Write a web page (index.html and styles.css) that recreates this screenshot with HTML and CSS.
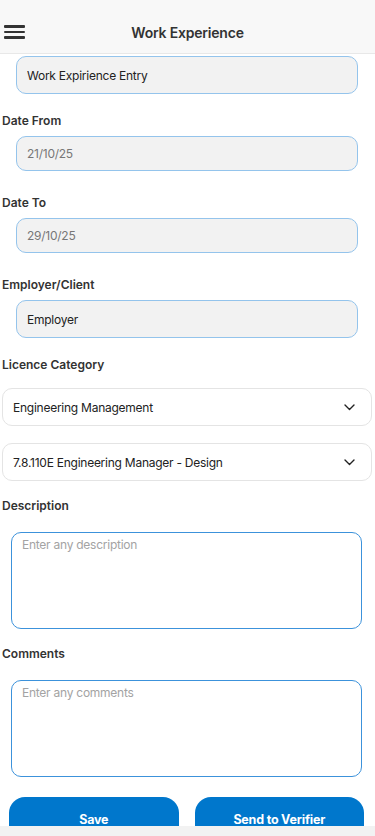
FILE: index.html
```html
<!DOCTYPE html>
<html lang="en">
<head>
    <meta charset="UTF-8">
    <meta name="viewport" content="width=device-width, initial-scale=1.0">
    <title>Work Experience</title>
    <link rel="stylesheet" href="styles.css">
</head>
<body>
    <header class="topbar">
        <button class="menu-btn" aria-label="Menu">
            <span></span><span></span><span></span>
        </button>
        <h1>Work Experience</h1>
    </header>

    <form class="form">
        <input class="field field-title" type="text" value="Work Expirience Entry">

        <label class="label label-first">Date From</label>
        <input class="field field-date" type="text" value="21/10/25" readonly>

        <label class="label">Date To</label>
        <input class="field field-date" type="text" value="29/10/25" readonly>

        <label class="label">Employer/Client</label>
        <input class="field" type="text" value="Employer">

        <label class="label label-select">Licence Category</label>
        <div class="select">
            <span>Engineering Management</span>
            <svg width="11" height="7" viewBox="0 0 11 7"><path d="M1 1l4.5 4.5L10 1" fill="none" stroke="#222" stroke-width="1.4" stroke-linecap="round" stroke-linejoin="round"/></svg>
        </div>
        <div class="select">
            <span>7.8.110E Engineering Manager - Design</span>
            <svg width="11" height="7" viewBox="0 0 11 7"><path d="M1 1l4.5 4.5L10 1" fill="none" stroke="#222" stroke-width="1.4" stroke-linecap="round" stroke-linejoin="round"/></svg>
        </div>

        <label class="label label-area">Description</label>
        <textarea class="area" placeholder="Enter any description"></textarea>

        <label class="label label-area">Comments</label>
        <textarea class="area" placeholder="Enter any comments"></textarea>

        <div class="actions">
            <button type="button" class="btn">Save</button>
            <button type="button" class="btn">Send to Verifier</button>
        </div>
    </form>

    <div class="bottom-bar"></div>
</body>
</html>
```

FILE: styles.css
```css
body {
    margin: 0;
    font-family: Inter, "Noto Sans", sans-serif;
    color: #222;
    background: #fff;
}

.topbar {
    height: 54px;
    background-color: #f8f8f8;
    border-bottom: 1px solid #e8e8e8;
    display: flex;
    align-items: center;
    justify-content: center;
    position: relative;
    padding-top: 11px;
    box-sizing: border-box;
}

.topbar h1 {
    margin: 0;
    font-size: 14px;
    font-weight: 600;
    letter-spacing: -0.2px;
    color: #333;
}

.menu-btn {
    position: absolute;
    left: 4px;
    top: 25px;
    width: 21px;
    padding: 0;
    border: none;
    background: none;
    display: flex;
    flex-direction: column;
    gap: 3px;
}

.menu-btn span {
    display: block;
    height: 2.5px;
    background-color: #333;
    border-radius: 1px;
}

.form {
    display: flex;
    flex-direction: column;
    padding: 2px 0 0;
}

.field {
    margin: 0 17px 0 16px;
    height: 38px;
    box-sizing: border-box;
    border: 1px solid #94c4ec;
    border-radius: 10px;
    background-color: #f2f2f2;
    padding: 0 10px;
    font-family: inherit;
    font-size: 12px;
    letter-spacing: -0.25px;
    color: #222;
    outline: none;
}

.field-date {
    height: 35px;
    color: #777;
}

.label {
    display: block;
    font-size: 12px;
    font-weight: 600;
    color: #333;
    line-height: 16px;
    margin: 24px 2px 7px;
}

.label-first {
    margin-top: 19px;
}

.label-select {
    margin-top: 19px;
    margin-bottom: 15px;
}

.label-area {
    margin-top: 17px;
    margin-bottom: 18px;
}

.select {
    margin: 0 3px 17px 2px;
    height: 38px;
    box-sizing: border-box;
    border: 1px solid #e4e4e4;
    border-radius: 10px;
    display: flex;
    align-items: center;
    justify-content: space-between;
    padding: 0 16px 0 10px;
    font-size: 12px;
    letter-spacing: -0.25px;
}

.select + .select {
    margin-bottom: 0;
}

.area {
    margin: 0 13px 0 11px;
    height: 97px;
    box-sizing: border-box;
    border: 1px solid #3c92db;
    border-radius: 10px;
    padding: 4px 10px;
    font-family: inherit;
    font-size: 12px;
    letter-spacing: -0.25px;
    resize: none;
    outline: none;
}

.area::placeholder {
    color: #a3a3a3;
}

.actions {
    display: flex;
    gap: 16px;
    margin: 20px 11px 0 9px;
}

.btn {
    flex: 1;
    height: 46px;
    border: none;
    border-radius: 16px;
    background-color: #0077cc;
    color: #fff;
    font-family: inherit;
    font-size: 12.5px;
    font-weight: 700;
    letter-spacing: -0.2px;
    padding-bottom: 2px;
}

.bottom-bar {
    position: fixed;
    left: 0;
    right: 0;
    bottom: 0;
    height: 10px;
    background-color: #f2f2f2;
}
```
